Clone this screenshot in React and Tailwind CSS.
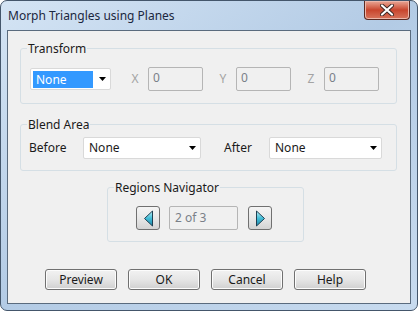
import React from "react";

const font = { fontFamily: '"Noto Sans", "Liberation Sans", sans-serif' };

function Arrow() {
  return (
    <svg className="w-[7px] h-[4px]" viewBox="0 0 7 4">
      <path d="M0 0h7L3.5 4z" fill="#000" />
    </svg>
  );
}

function Combo({ w, selected }) {
  return (
    <div
      className={`${w} h-[22px] bg-white border border-[#d9d9d9] rounded-[2px] flex items-center pl-[1px] pr-[4px]`}
    >
      {selected ? (
        <span className="ml-[1px] h-[17px] w-[60px] bg-[#3399ff] text-white text-[12px] leading-[17px] pl-[3px]">
          None
        </span>
      ) : (
        <span className="text-[12px] text-[#1a1a1a] pl-[4px]">None</span>
      )}
      <span className="ml-auto flex items-center">
        <Arrow />
      </span>
    </div>
  );
}

function NumBox({ label }) {
  return (
    <div className="flex items-center">
      <span className="w-[10px] text-[12px] text-[#a3a3a3] text-center">{label}</span>
      <div className="ml-[8px] w-[55px] h-[24px] border border-[#b5b5b5] rounded-[2px] bg-[#f0f0f0] text-[12px] text-[#7a7f88] pl-[4px] leading-[19px]">
        0
      </div>
    </div>
  );
}

function NavBtn({ dir }) {
  return (
    <div className="w-[24px] h-[24px] border border-[#707070] rounded-[3px] bg-gradient-to-b from-[#f4f4f4] via-[#e8e8e8] to-[#d3d3d3] flex items-center justify-center">
      <svg className="w-[11px] h-[17px]" viewBox="0 0 11 17">
        <defs>
          <linearGradient id={`g${dir}`} x1="0" y1="0" x2="0" y2="1">
            <stop offset="0" stopColor="#b8eef5" />
            <stop offset="0.5" stopColor="#41bcd6" />
            <stop offset="1" stopColor="#1f86a8" />
          </linearGradient>
        </defs>
        <path
          d={dir === "l" ? "M9.5 1v15L1.5 8.5z" : "M1.5 1v15l8-7.5z"}
          fill={`url(#g${dir})`}
          stroke="#1d3f52"
          strokeWidth="1"
          strokeLinejoin="round"
        />
      </svg>
    </div>
  );
}

function Btn({ children }) {
  return (
    <div className="w-[72px] h-[21px] border border-[#707070] rounded-[3px] bg-gradient-to-b from-[#f2f2f2] via-[#e6e6e6] to-[#d0d0d0] shadow-[inset_0_0_0_1px_#fcfcfc] flex items-center justify-center text-[12px] text-[#1a1a1a]">
      {children}
    </div>
  );
}

export default function App() {
  return (
    <div style={font} className="w-[418px] h-[311px] bg-white">
      <div className="w-[418px] h-[311px] border border-[#44566b] rounded-[7px] bg-gradient-to-br from-[#d4e4f4] via-[#b3cbe5] to-[#c8dbef] px-[6px] pb-[6px] flex flex-col">
        {/* title bar */}
        <div className="h-[29px] flex items-start">
          <span className="mt-[6px] ml-[1px] text-[12px] text-[#1b2740]">
            Morph Triangles using Planes
          </span>
          <div className="ml-auto mr-[1px] w-[46px] h-[19px] rounded-b-[4px] border border-[#5b2a22] border-t-0 bg-gradient-to-b from-[#e8a796] via-[#c8452d] to-[#d7735b] shadow-[inset_0_0_0_1px_#ecb7aa] flex items-center justify-center">
            <svg className="w-[14px] h-[12px]" viewBox="0 0 14 12">
              <path d="M2 1.5l10 9M12 1.5l-10 9" stroke="#3b2522" strokeWidth="4" strokeLinecap="round" />
              <path d="M2 1.5l10 9M12 1.5l-10 9" stroke="#fff" strokeWidth="2.2" strokeLinecap="round" />
            </svg>
          </div>
        </div>

        {/* client area */}
        <div className="flex-1 border border-[#5a6b7e] bg-[#f0f0f0] flex flex-col">
          <fieldset className="mt-[10px] ml-[12px] mr-[13px] border border-[#d5dfe5] rounded-[3px] pl-[9px] pt-[11px] pb-[12px]">
            <legend className="-ml-[3px] px-[1px] text-[12px] leading-[15px] text-[#1a1a1a]">Transform</legend>
            <div className="flex items-center">
              <Combo w="w-[81px]" selected />
              <div className="ml-[19px]">
                <NumBox label="X" />
              </div>
              <div className="ml-[15px]">
                <NumBox label="Y" />
              </div>
              <div className="ml-[15px]">
                <NumBox label="Z" />
              </div>
            </div>
          </fieldset>

          <fieldset className="mt-[13px] ml-[12px] mr-[13px] border border-[#d5dfe5] rounded-[3px] pl-[8px] pt-[5px] pb-[11px]">
            <legend className="-ml-[2px] px-[1px] text-[12px] leading-[15px] text-[#1a1a1a]">Blend Area</legend>
            <div className="flex items-center">
              <span className="w-[54px] text-[12px] text-[#1a1a1a]">Before</span>
              <Combo w="w-[118px]" />
              <span className="ml-[23px] w-[45px] text-[12px] text-[#1a1a1a]">After</span>
              <Combo w="w-[113px]" />
            </div>
          </fieldset>

          <fieldset className="mt-[9px] ml-[99px] w-[197px] border border-[#d5dfe5] rounded-[3px] pl-[28px] pt-[11px] pb-[11px]">
            <legend className="-ml-[22px] px-[1px] text-[12px] leading-[15px] text-[#1a1a1a]">Regions Navigator</legend>
            <div className="flex items-center">
              <NavBtn dir="l" />
              <div className="ml-[9px] w-[69px] h-[24px] border border-[#b5b5b5] rounded-[2px] bg-[#f0f0f0] text-[12px] text-[#7a7f88] pl-[5px] leading-[21px]">
                2 of 3
              </div>
              <div className="ml-[10px]">
                <NavBtn dir="r" />
              </div>
            </div>
          </fieldset>

          <div className="mt-[27px] pl-[37px] flex gap-[11px]">
            <Btn>Preview</Btn>
            <Btn>OK</Btn>
            <Btn>Cancel</Btn>
            <Btn>Help</Btn>
          </div>
        </div>
      </div>
    </div>
  );
}
